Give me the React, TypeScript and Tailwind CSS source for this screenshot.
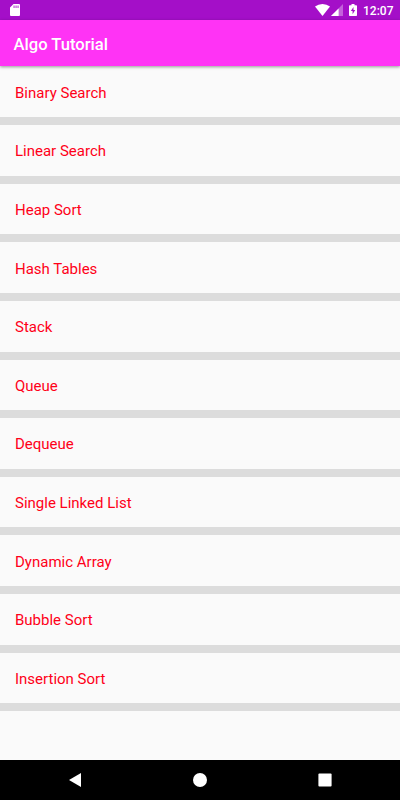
const topics = ['Binary Search', 'Linear Search', 'Heap Sort', 'Hash Tables', 'Stack', 'Queue', 'Dequeue', 'Single Linked List', 'Dynamic Array', 'Bubble Sort', 'Insertion Sort'];

function StatusBar() {
  return (
    <div className="flex h-5 shrink-0 items-center justify-between bg-[#a40fc8] pl-[10px] pr-[6.5px] text-white">
      <svg width="10" height="12" viewBox="0 0 10 12" fill="currentColor"><path fillRule="evenodd" d="M3.5 0H9Q10 0 10 1V11Q10 12 9 12H1Q0 12 0 11V3.5ZM3.6 1.6V4H4.5V1.6ZM5.6 1.6V4H6.5V1.6ZM7.6 1.6V4H8.5V1.6Z" /></svg>
      <div className="flex items-center">
        <svg width="15" height="12" viewBox="0 0 15 12" fill="currentColor"><path d="M0 2.6Q3.2 0 7.5 0T15 2.6L7.5 12Z" /></svg>
        <svg className="ml-px" width="12" height="12" viewBox="0 0 12 12" fill="currentColor"><path opacity=".35" d="M12 0V12H0Z" /><path d="M7.6 4.4V12H0Z" /></svg>
        <svg className="ml-[6px]" width="8" height="12" viewBox="0 0 8 12" fill="currentColor"><path fillRule="evenodd" d="M2.5 0H5.5V1.2H7.2Q8 1.2 8 2V11.2Q8 12 7.2 12H.8Q0 12 0 11.2V2Q0 1.2 .8 1.2H2.5ZM4.5 3L1.8 7H3.6V10.3L6.2 6.1H4.5Z" /></svg>
        <span className="ml-[6px] pt-[2px] text-[12px] leading-[18px] font-medium">12:07</span>
      </div>
    </div>
  );
}

export default function App() {
  return (
    <div className="flex h-[800px] w-[400px] flex-col overflow-hidden bg-[#fafafa] font-['Roboto',sans-serif]">
      <StatusBar />
      <header className="z-10 flex h-[46px] shrink-0 items-center bg-[#ff33f5] pl-[13.5px] pt-[4px] text-[16.6px] font-medium text-white shadow-[0_1px_3px_rgba(0,0,0,0.4)]">Algo Tutorial</header>
      <ul className="flex-1 pt-[0.6px]">
        {topics.map((t) => (
          <li key={t} className="flex h-[58.6px] items-center border-b-[8px] border-[#dcdcdc] pl-[15px] pt-[2.4px] text-[15px] text-[#ff0018]">{t}</li>
        ))}
      </ul>
      <nav className="flex h-10 shrink-0 items-center justify-center gap-[111px] bg-black text-white">
        <svg width="14" height="14" viewBox="0 0 14 14" fill="currentColor"><path d="M13 0V14L1 7Z" /></svg>
        <svg width="14" height="14" viewBox="0 0 14 14" fill="currentColor"><circle cx="7" cy="7" r="7" /></svg>
        <svg width="14" height="14" viewBox="0 0 14 14" fill="currentColor"><rect x=".4" y=".4" width="13.2" height="13.2" rx="1" /></svg>
      </nav>
    </div>
  );
}
